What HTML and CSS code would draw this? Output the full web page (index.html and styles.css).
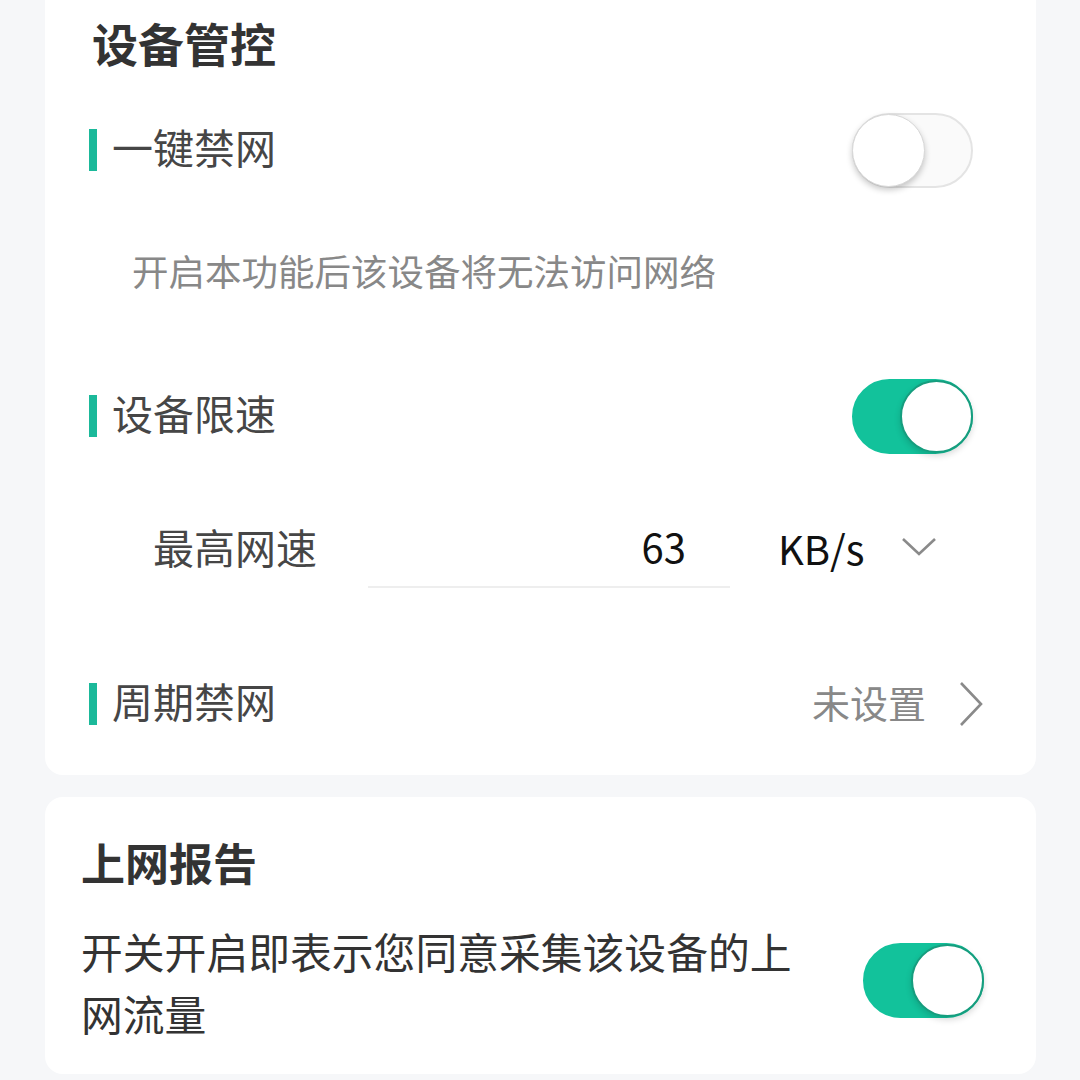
FILE: index.html
```html
<!DOCTYPE html>
<html lang="zh-CN">

<head>
    <meta charset="UTF-8">
    <meta name="viewport" content="width=device-width, initial-scale=1.0">
    <title>设备管控</title>
    <link rel="stylesheet" href="styles.css">
</head>

<body>
    <div class="card card-control">
        <h1 class="card-title">设备管控</h1>

        <div class="row row-first">
            <div class="label"><span class="bar"></span><span class="label-text">一键禁网</span></div>
            <div class="switch"><span class="knob"></span></div>
        </div>
        <p class="desc">开启本功能后该设备将无法访问网络</p>

        <div class="row row-speed">
            <div class="label"><span class="bar"></span><span class="label-text">设备限速</span></div>
            <div class="switch on"><span class="knob"></span></div>
        </div>
        <div class="speed">
            <span class="speed-label">最高网速</span>
            <div class="speed-input">63</div>
            <span class="speed-unit">KB/s</span>
            <svg class="arrow-down" width="36" height="20" viewBox="0 0 36 20">
                <path d="M2 2 L18 17 L34 2" fill="none" stroke="#8a8a8a" stroke-width="2.6" />
            </svg>
        </div>

        <div class="row row-period">
            <div class="label"><span class="bar"></span><span class="label-text">周期禁网</span></div>
            <div class="link">
                <span class="link-text">未设置</span>
                <svg class="arrow-right" width="26" height="46" viewBox="0 0 26 46">
                    <path d="M3 2 L23 23 L3 44" fill="none" stroke="#8a8a8a" stroke-width="2.6" />
                </svg>
            </div>
        </div>
    </div>

    <div class="card card-report">
        <h2 class="card-title small">上网报告</h2>
        <div class="report">
            <p class="report-text">开关开启即表示您同意采集该设备的上网流量</p>
            <div class="switch on"><span class="knob"></span></div>
        </div>
    </div>
</body>

</html>
```

FILE: styles.css
```css
* {
    margin: 0;
    padding: 0;
    box-sizing: border-box;
}

body {
    background: #f6f7f9;
    font-family: "Noto Sans CJK SC", "Noto Sans", sans-serif;
    color: #444;
}

.card {
    background: #fff;
    margin: 0 44px 0 45px;
    border-radius: 18px;
}

.card-control {
    margin-top: -30px;
    padding: 42px 52px 31px 44px;
}

.card-title {
    font-size: 46px;
    font-weight: bold;
    color: #333;
    line-height: 60px;
    padding-left: 3px;
}

.card-title.small {
    font-size: 44px;
    padding-left: 0;
}

.row {
    display: flex;
    align-items: center;
    justify-content: space-between;
    height: 80px;
}

.row-first {
    margin-top: 38px;
}

.row-speed {
    margin-top: 79px;
}

.row-period {
    margin-top: 76px;
}

.label {
    display: flex;
    align-items: center;
    font-size: 41px;
    color: #464646;
}

.label-text {
    padding-bottom: 8px;
}

.bar {
    display: inline-block;
    width: 8px;
    height: 42px;
    background: #1bb99a;
    margin-right: 15px;
}

.desc {
    margin-top: 57px;
    height: 50px;
    line-height: 48px;
    padding-left: 43px;
    font-size: 36.5px;
    color: #888;
}

.switch {
    position: relative;
    width: 121px;
    height: 75px;
    border-radius: 38px;
    background: #fafafa;
    border: 2px solid #e4e4e4;
    margin-right: 11px;
}

.switch .knob {
    position: absolute;
    left: -2px;
    top: -1px;
    width: 73px;
    height: 73px;
    border-radius: 50%;
    background: #fff;
    border: 1px solid #d8d8d8;
    box-shadow: 0 3px 6px rgba(0, 0, 0, 0.22);
}

.switch.on {
    background: #12c29b;
    border-color: #12c29b;
}

.switch.on .knob {
    left: auto;
    right: -2px;
    border: 2px solid #169d7e;
    box-shadow: 0 3px 6px rgba(0, 0, 0, 0.15);
}

.speed {
    display: flex;
    align-items: center;
    height: 80px;
    margin-top: 52px;
    padding-left: 64px;
}

.speed-label {
    font-size: 41px;
    width: 215px;
    padding-bottom: 4px;
    color: #464646;
}

.speed-input {
    width: 362px;
    height: 80px;
    line-height: 76px;
    text-align: right;
    padding-right: 44px;
    font-size: 40px;
    color: #111;
    border-bottom: 2px solid #eee;
    align-self: flex-end;
}

.speed-unit {
    font-size: 40px;
    color: #111;
    margin-left: 48px;
}

.arrow-down {
    margin-left: 36px;
    margin-top: -2px;
}

.link {
    display: flex;
    align-items: center;
}

.link-text {
    font-size: 38px;
    color: #888;
    padding-bottom: 6px;
}

.arrow-right {
    margin-left: 32px;
}

.card-report {
    margin-top: 22px;
    padding: 35px 41px 22px 36px;
}

.report {
    display: flex;
    align-items: center;
    justify-content: space-between;
    margin-top: 28px;
}

.report .switch {
    margin-bottom: 12px;
}

.report-text {
    width: 730px;
    font-size: 41.8px;
    line-height: 62px;
    color: #333;
    padding-bottom: 8px;
}
```
